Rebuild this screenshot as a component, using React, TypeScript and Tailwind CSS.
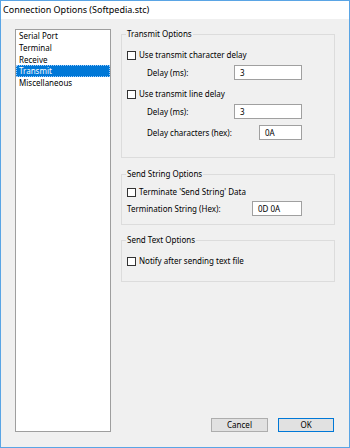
import React from "react";

const font = { fontFamily: '"Noto Sans", "Liberation Sans", sans-serif' };

const pages = ["Serial Port", "Terminal", "Receive", "Transmit", "Miscellaneous"];

function CheckRow({ label, className = "" }: { label: string; className?: string }) {
  return (
    <div className={"flex items-center h-[12px] pl-[5px] " + className}>
      <span className="w-[9px] h-[9px] border border-[#333333] bg-white shrink-0" />
      <span className="ml-[3px] leading-[12px] whitespace-nowrap">{label}</span>
    </div>
  );
}

function Field({ value, className = "" }: { value: string; className?: string }) {
  return (
    <div className={"h-[15px] border border-[#a0a0a0] bg-white pl-[5px] leading-[13px] " + className}>
      {value}
    </div>
  );
}

function Group({ title, className = "", children }: { title: string; className?: string; children: React.ReactNode }) {
  return (
    <div className={"relative border border-[#dcdcdc] " + className}>
      <span className="absolute -top-[7px] left-[4px] px-[1px] bg-[#f0f0f0] leading-[12px] whitespace-nowrap">{title}</span>
      {children}
    </div>
  );
}

export default function App() {
  return (
    <div
      style={font}
      className="w-[350px] h-[448px] border border-[#5aa5e5] flex flex-col text-[8px] text-black overflow-hidden"
    >
      {/* title bar */}
      <div className="h-[18px] bg-white flex items-center pl-[2px] text-[9px]">
        Connection Options (Softpedia.stc)
      </div>

      {/* body */}
      <div className="flex-1 bg-[#f0f0f0] flex items-start pt-[10px] pl-[14px]">
        <div className="w-[96px] h-[403px] border border-[#9e9e9e] bg-white">
          {pages.map((p) => (
            <div
              key={p}
              className={
                "h-[11.8px] leading-[11.8px] pl-[3px] whitespace-nowrap " +
                (p === "Transmit" ? "bg-[#0078d7] text-white outline-dotted outline-1 -outline-offset-1 outline-[#99ccff]" : "")
              }
            >
              {p}
            </div>
          ))}
        </div>

        <div className="ml-[10px] w-[214px] h-[403px] flex flex-col">
          <Group title="Transmit Options" className="mt-[5px] h-[124px]">
            <CheckRow label="Use transmit character delay" className="mt-[14px]" />
            <div className="flex items-center mt-[4px] pl-[25px]">
              <span className="w-[87px] whitespace-nowrap">Delay (ms):</span>
              <Field value="3" className="w-[68px]" />
            </div>
            <CheckRow label="Use transmit line delay" className="mt-[8px]" />
            <div className="flex items-center mt-[4px] pl-[25px]">
              <span className="w-[87px] whitespace-nowrap">Delay (ms):</span>
              <Field value="3" className="w-[68px]" />
            </div>
            <div className="flex items-center mt-[6px] pl-[25px]">
              <span className="w-[112px] whitespace-nowrap">Delay characters (hex):</span>
              <Field value="0A" className="w-[43px]" />
            </div>
          </Group>

          <Group title="Send String Options" className="mt-[16px] h-[51px]">
            <CheckRow label="Terminate 'Send String' Data" className="mt-[11px]" />
            <div className="flex items-center mt-[3px] pl-[5px]">
              <span className="w-[125px] whitespace-nowrap">Termination String (Hex):</span>
              <Field value="0D 0A" className="w-[50px]" />
            </div>
          </Group>

          <Group title="Send Text Options" className="mt-[15px] h-[42px]">
            <CheckRow label="Notify after sending text file" className="mt-[14px]" />
          </Group>

          <div className="mt-auto flex justify-end gap-[10px] pr-[1px]">
            <button className="w-[57px] h-[14px] border border-[#adadad] bg-[#e1e1e1] leading-[12px]">Cancel</button>
            <button className="w-[56px] h-[14px] border border-[#0078d7] bg-[#e1e1e1] leading-[12px]">OK</button>
          </div>
        </div>
      </div>
    </div>
  );
}
